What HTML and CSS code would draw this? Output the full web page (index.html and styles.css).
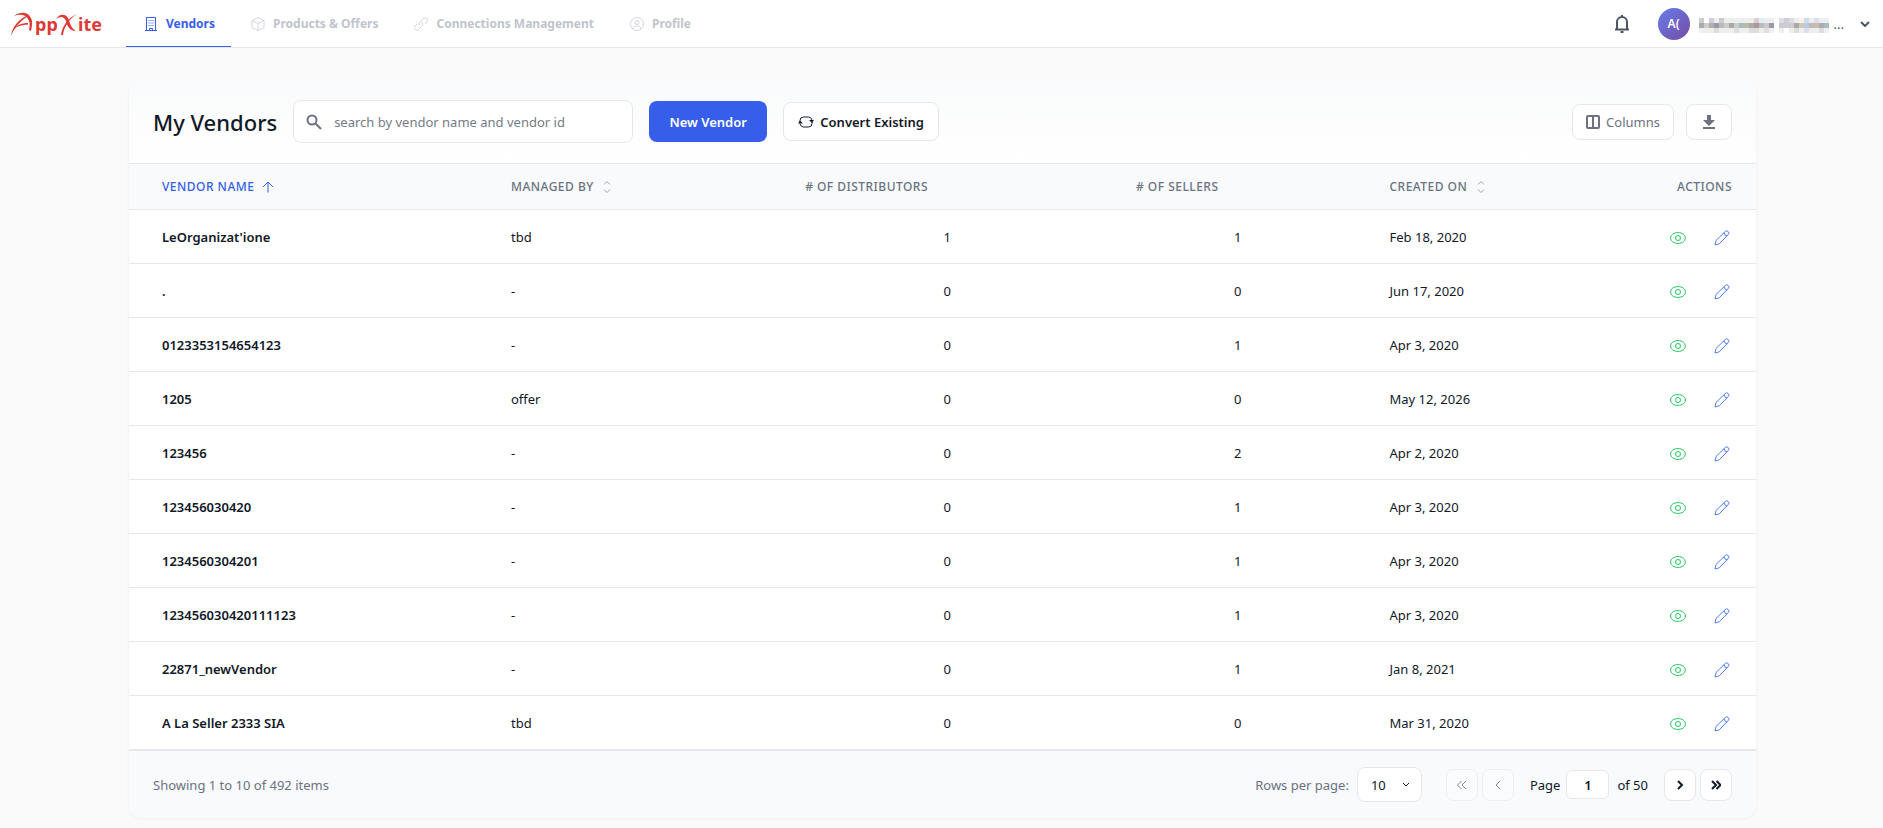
FILE: index.html
```html
<!DOCTYPE html>
<html lang="en">
<head>
    <meta charset="utf-8">
    <title>My Vendors</title>
    <link rel="stylesheet" href="styles.css">
</head>
<body>

<svg class="sprite" aria-hidden="true">
    <symbol id="eye" viewBox="0 0 16 16">
        <path d="M.6 8C.6 4.800 3.800 2.600 8 2.600S15.400 4.800 15.400 8 12.200 13.400 8 13.400.6 11.200.6 8z"/>
        <circle cx="8" cy="8" r="2.500"/>
    </symbol>
    <symbol id="pencil" viewBox="0 0 16 16">
        <path d="M1 15l1-4.500L11.200 1.600a2 2 0 0 1 3 0 2 2 0 0 1 0 3L5.300 13.800 1 15z"/>
        <path d="M10.200 2.800c0 1.800 1.200 3 3 3"/>
    </symbol>
    <symbol id="sort" viewBox="0 0 12 14">
        <path d="M3 4.500L6 1.500l3 3M3 9.500l3 3 3-3"/>
    </symbol>
</svg>

<header class="topbar">
    <a class="logo" href="#" aria-label="AppXite">
        <svg width="92" height="26" viewBox="0 0 92 26">
            <path d="M1 25C2 16 9 7 20 3.500C12 9 5 15 1 25z"/>
            <path d="M4 5C11 0 18 1 21 7c2 4 1 8 0 13l-2-1c1-5 1-8-1-11C15 3 10 3 4 5z"/>
            <path d="M4 18c3-4 8-6 14-6v1.500C12 14 8 15 4 18z"/>
            <path d="M46 8c3-5 9-6 12-1 2 5 3 10 8 13-6 0-9-5-10-10-2-5-6-5-10-2z"/>
            <path d="M67 3C59 6 52 15 51 24l2 0C54 16 59 8 67 3z"/>
            <text x="25" y="20">pp</text>
            <text x="68" y="20">ite</text>
        </svg>
    </a>
    <nav class="tabs">
        <a class="tab active" href="#">
            <svg width="14" height="14" viewBox="0 0 14 14"><path d="M1 13.500h12M2.500 13.500V.5h9v13M5.500 13.500v-2h3v2"/><path stroke-dasharray="1 1.500" d="M5 3v7M7 3v7M9 3v7"/></svg>
            Vendors
        </a>
        <a class="tab" href="#">
            <svg width="14" height="14" viewBox="0 0 14 14"><path d="M7 .5l6 3v7l-6 3-6-3v-7zM1 3.500l6 3 6-3M7 6.500v7"/></svg>
            Products &amp; Offers
        </a>
        <a class="tab" href="#">
            <svg width="14" height="14" viewBox="0 0 14 14"><path d="M6 8.500a2.600 2.600 0 0 1 0-3.500l3.200-3.400a2.500 2.500 0 0 1 3.600 3.600L11 7M8 5.500A2.600 2.600 0 0 1 8 9l-3.200 3.400a2.500 2.500 0 0 1-3.600-3.600L3 7"/></svg>
            Connections Management
        </a>
        <a class="tab" href="#">
            <svg width="14" height="14" viewBox="0 0 14 14"><circle cx="7" cy="7" r="6.500"/><circle cx="7" cy="5.500" r="2"/><path d="M3 12c0-4 8-4 8 0"/></svg>
            Profile
        </a>
    </nav>
    <div class="account">
        <button class="bell" aria-label="Notifications">
            <svg width="16" height="20" viewBox="0 0 16 20"><path d="M1 15.500h14M3 15V8a5 5 0 0 1 10 0v7M8 3V1M6.500 18h3"/></svg>
        </button>
        <button class="user">
            <span class="avatar">A(</span>
            <svg class="mosaic" id="mosaic" width="134" height="15" viewBox="0 0 134 15" shape-rendering="crispEdges"></svg>
            <span class="dots">...</span>
            <svg class="chevron" width="10" height="6" viewBox="0 0 10 6"><path d="M1 1l4 4 4-4"/></svg>
        </button>
    </div>
</header>

<main class="page">
    <section class="card">
        <div class="card-header">
            <h1>My Vendors</h1>
            <label class="search">
                <svg width="16" height="16" viewBox="0 0 16 16"><circle cx="6" cy="6" r="4.500"/><path d="M9.500 9.500L15 15"/></svg>
                <input type="text" placeholder="search by vendor name and vendor id" aria-label="Search vendors">
            </label>
            <button class="btn primary">New Vendor</button>
            <button class="btn convert">
                <svg width="16" height="16" viewBox="0 0 16 16"><path d="M2 8V6.500Q2 3 5.500 3h5Q13 3 14 6M14 8v1.500Q14 13 10.500 13h-5Q3 13 2 10"/><path class="fill" d="M11 6h5l-2 3zM0 9.500h5l-3-3z"/></svg>
                Convert Existing
            </button>
            <div class="tools">
                <button class="btn tool">
                    <svg width="14" height="14" viewBox="0 0 14 14"><rect x="1" y="1" width="12" height="12" rx="1"/><path d="M7 1v12"/></svg>
                    Columns
                </button>
                <button class="btn tool download" aria-label="Download">
                    <svg width="14" height="16" viewBox="0 0 14 16"><path class="fill" d="M5 1h4v5h4l-6 6-6-6h4zM1 13h12v2H1z"/></svg>
                </button>
            </div>
        </div>

        <table>
            <thead>
                <tr>
                    <th class="name sorted">Vendor Name <svg width="12" height="12" viewBox="0 0 12 12"><path d="M6 11.500V1M1 6l5-5 5 5"/></svg></th>
                    <th class="managed">Managed By <svg class="sort" width="12" height="14"><use href="#sort"/></svg></th>
                    <th class="dist"># of Distributors</th>
                    <th class="sellers"># of Sellers</th>
                    <th class="created">Created On <svg class="sort" width="12" height="14"><use href="#sort"/></svg></th>
                    <th class="actions">Actions</th>
                </tr>
            </thead>
            <tbody id="vendors"></tbody>
        </table>

        <footer class="card-footer">
            <span>Showing 1 to 10 of 492 items</span>
            <div class="pager">
                <label for="rows">Rows per page:</label>
                <div class="select">
                    <select id="rows"><option>10</option><option>25</option><option>50</option></select>
                    <svg width="8" height="6" viewBox="0 0 8 6"><path d="M1 1l3 3 3-3"/></svg>
                </div>
                <button class="step" disabled aria-label="First page"><svg width="10" height="10" viewBox="0 0 10 10"><path d="M4.500 1l-4 4 4 4M9 1L5 5l4 4"/></svg></button>
                <button class="step" disabled aria-label="Previous page"><svg width="10" height="10" viewBox="0 0 10 10"><path d="M7 1L3 5l4 4"/></svg></button>
                <label class="page-label" for="page">Page</label>
                <input id="page" type="text" value="1">
                <span class="total">of 50</span>
                <button class="step" aria-label="Next page"><svg width="10" height="10" viewBox="0 0 10 10"><path d="M3 1l4 4-4 4"/></svg></button>
                <button class="step" aria-label="Last page"><svg width="10" height="10" viewBox="0 0 10 10"><path d="M1 1l4 4-4 4M5.500 1l4 4-4 4"/></svg></button>
            </div>
        </footer>
    </section>
</main>

<script src="script.js"></script>
</body>
</html>
```
FILE: styles.css
```css
* {
    box-sizing: border-box;
}

body {
    margin: 0;
    background: #fafafa;
    color: #111827;
    font: 13px/20px "Noto Sans", "Open Sans", sans-serif;
}

button, input, select {
    font: inherit;
    color: inherit;
}

button {
    cursor: pointer;
}

svg {
    fill: none;
    stroke: currentColor;
    flex: none;
}

.fill {
    fill: currentColor;
    stroke: none;
}

.sprite {
    display: none;
}

/* top bar */
.topbar {
    display: flex;
    height: 48px;
    background: #fff;
    border-bottom: 1px solid #e5e7eb;
}

.logo {
    display: flex;
    align-items: center;
    width: 126px;
    padding-left: 10px;
    color: #dc3a34;
}

.logo path {
    fill: currentColor;
    stroke: none;
}

.logo text {
    fill: currentColor;
    stroke: none;
    font-size: 18px;
    font-weight: 700;
}

.tabs {
    display: flex;
    gap: 2px;
}

.tab {
    display: flex;
    align-items: center;
    gap: 8px;
    padding: 2px 16px 0 18px;
    border-bottom: 1px solid transparent;
    color: #c0c4cc;
    font-weight: 700;
    font-size: 12px;
    text-decoration: none;
}

.tab svg {
    opacity: 0.7;
}

.tab.active {
    color: #365ee8;
    border-color: #365ee8;
}

.tab.active svg {
    opacity: 1;
}

.account {
    display: flex;
    align-items: center;
    gap: 28px;
    margin-left: auto;
    padding-right: 13px;
}

.bell, .user {
    display: flex;
    align-items: center;
    padding: 0;
    border: 0;
    background: none;
    color: #4b5563;
}

.bell svg {
    stroke-width: 2;
}

.avatar {
    width: 32px;
    height: 32px;
    margin-right: 8px;
    border-radius: 50%;
    background: linear-gradient(135deg, #667eea, #764ba2);
    color: #fff;
    font-weight: 600;
    font-size: 12px;
    line-height: 32px;
}

.mosaic {
    margin-top: 4px;
    margin-right: 2px;
    stroke: none;
}

.chevron {
    margin-left: 16px;
    stroke-width: 2;
}

/* card */
.page {
    padding: 32px 127px 8px 129px;
}

.card {
    overflow: hidden;
    border-radius: 12px;
    background: #fff;
    box-shadow: 0 1px 3px rgba(0, 0, 0, 0.06);
}

.card-header {
    display: flex;
    align-items: center;
    height: 83px;
    padding: 0 24px;
    background: linear-gradient(#f9fafb, #fff);
}

h1 {
    margin: 0 16px 0 0;
    font-size: 22px;
    font-weight: 500;
    line-height: 32px;
}

.search {
    display: flex;
    align-items: center;
    gap: 12px;
    width: 340px;
    height: 43px;
    margin-right: 16px;
    padding: 0 12px;
    border: 1px solid #e5e7eb;
    border-radius: 8px;
    background: #fff;
    color: #6b7280;
}

.search svg {
    stroke-width: 2;
}

.search input {
    flex: 1;
    min-width: 0;
    padding: 0;
    border: 0;
    outline: 0;
}

.search input::placeholder {
    color: #757b87;
}

.btn {
    display: flex;
    align-items: center;
    justify-content: center;
    gap: 6px;
    height: 39px;
    padding: 0 14px;
    border: 1px solid #e5e7eb;
    border-radius: 8px;
    background: #fff;
    font-weight: 600;
}

.primary {
    width: 118px;
    height: 41px;
    margin-right: 16px;
    border: 0;
    background: #365ee8;
    color: #fff;
}

.convert {
    width: 156px;
    padding: 0;
}

.tools {
    display: flex;
    gap: 12px;
    margin-left: auto;
}

.tool {
    width: 102px;
    height: 36px;
    color: #6b7280;
    font-weight: 400;
}

.tool rect, .tool path {
    stroke-width: 2;
}

.tool .fill {
    stroke: none;
}

.download {
    width: 46px;
}

/* table */
table {
    width: 100%;
    table-layout: fixed;
    border-collapse: collapse;
}

th {
    height: 46px;
    padding: 0 24px;
    border-top: 1px solid #e5e7eb;
    border-bottom: 1px solid #e5e7eb;
    background: #f8fafc;
    color: #6b7280;
    font-size: 12px;
    font-weight: 500;
    letter-spacing: 0.04em;
    text-align: left;
    text-transform: uppercase;
}

th svg {
    margin-left: 4px;
    vertical-align: middle;
}

.sort {
    color: #9ca3af;
}

td {
    height: 54px;
    padding: 0 24px;
    border-bottom: 1px solid #e5e7eb;
}

.name {
    width: 22%;
    padding-left: 33px;
}

td.name {
    font-weight: 600;
}

.sorted {
    color: #365ee8;
}

.managed, .dist, .created {
    width: 15%;
}

.sellers {
    width: 24%;
}

.actions {
    width: 9%;
}

.dist, .sellers, .actions {
    text-align: right;
}

td.sellers {
    padding-right: 124px;
}

th.dist {
    padding-right: 47px;
}

th.sellers {
    padding-right: 147px;
}

td.actions {
    padding-right: 26px;
}

.icon-btn {
    padding: 0;
    border: 0;
    background: none;
    vertical-align: middle;
}

.view {
    margin-right: 28px;
    color: #22c55e;
}

.edit {
    color: #4f7df3;
}

.icon-btn svg {
    display: block;
}

/* footer */
.card-footer {
    display: flex;
    align-items: center;
    justify-content: space-between;
    height: 68px;
    padding: 0 24px;
    border-top: 1px solid #e5e7eb;
    background: #f8fafc;
    color: #6b7280;
}

.pager {
    display: flex;
    align-items: center;
    gap: 4px;
}

.select {
    display: flex;
    align-items: center;
    margin: 0 20px 0 4px;
    color: #111827;
}

.select select {
    width: 65px;
    height: 35px;
    padding: 0 13px;
    border: 1px solid #e5e7eb;
    border-radius: 8px;
    background: #fff;
    appearance: none;
}

.select svg {
    margin-left: -20px;
    margin-right: 12px;
    pointer-events: none;
}

.step {
    display: flex;
    align-items: center;
    justify-content: center;
    width: 32px;
    height: 32px;
    padding: 0;
    border: 1px solid #e5e7eb;
    border-radius: 8px;
    background: #fff;
    color: #111827;
}

.step path {
    stroke-width: 2;
}

.step:disabled {
    opacity: 0.5;
}

.step:disabled path {
    stroke-width: 1;
}

.page-label, .total {
    color: #111827;
}

.page-label {
    margin: 0 2px 0 12px;
}

.total {
    margin: 0 12px 0 4px;
}

#page {
    width: 43px;
    height: 29px;
    padding: 0;
    border: 1px solid #e5e7eb;
    border-radius: 6px;
    background: #fff;
    color: #111827;
    font-weight: 600;
    text-align: center;
}
```
FILE: script.js
```js
var vendors = [
    ["LeOrganizat'ione", 'tbd', 1, 1, 'Feb 18, 2020'],
    ['.', '-', 0, 0, 'Jun 17, 2020'],
    ['0123353154654123', '-', 0, 1, 'Apr 3, 2020'],
    ['1205', 'offer', 0, 0, 'May 12, 2026'],
    ['123456', '-', 0, 2, 'Apr 2, 2020'],
    ['123456030420', '-', 0, 1, 'Apr 3, 2020'],
    ['1234560304201', '-', 0, 1, 'Apr 3, 2020'],
    ['123456030420111123', '-', 0, 1, 'Apr 3, 2020'],
    ['22871_newVendor', '-', 0, 1, 'Jan 8, 2021'],
    ['A La Seller 2333 SIA', 'tbd', 0, 0, 'Mar 31, 2020']
];

function iconButton(name, label, icon) {
    return '<button class="icon-btn ' + name + '" aria-label="' + label + '">' +
        '<svg width="16" height="16"><use href="#' + icon + '"/></svg></button>';
}

document.getElementById('vendors').innerHTML = vendors.map(function(v) {
    return '<tr><td class="name">' + v[0] + '</td><td>' + v[1] + '</td>' +
        '<td class="dist">' + v[2] + '</td><td class="sellers">' + v[3] + '</td>' +
        '<td>' + v[4] + '</td><td class="actions">' +
        iconButton('view', 'View', 'eye') + iconButton('edit', 'Edit', 'pencil') +
        '</td></tr>';
}).join('');

// masked user name: one hex colour per 5px block
var blocks = [
    'ccc fff ccd eee ccc eee eee eee eee eee eee dcc def eee eee fff ddd ccd ddd eee fee cde eee dde eee eee',
    'aaa ccc baa 99a bbb ccc aaa ccc abb bba aaa a99 bbb ccc 99a fff ccc ccd ccc aaa ccb bcd bbb cba aab abb',
    'eee eee eee ddd eee eee eee ddd eee eee ddd ddd eee ddd eee fff eee fff eee ddd eee dde eee eee ddd eee'
];

document.getElementById('mosaic').innerHTML = blocks.map(function(row, y) {
    return row.split(' ').map(function(color, x) {
        return '<rect x="' + (1 + x * 5) + '" y="' + y * 5 + '" width="5" height="5" fill="#' + color + '"/>';
    }).join('');
}).join('');
```
